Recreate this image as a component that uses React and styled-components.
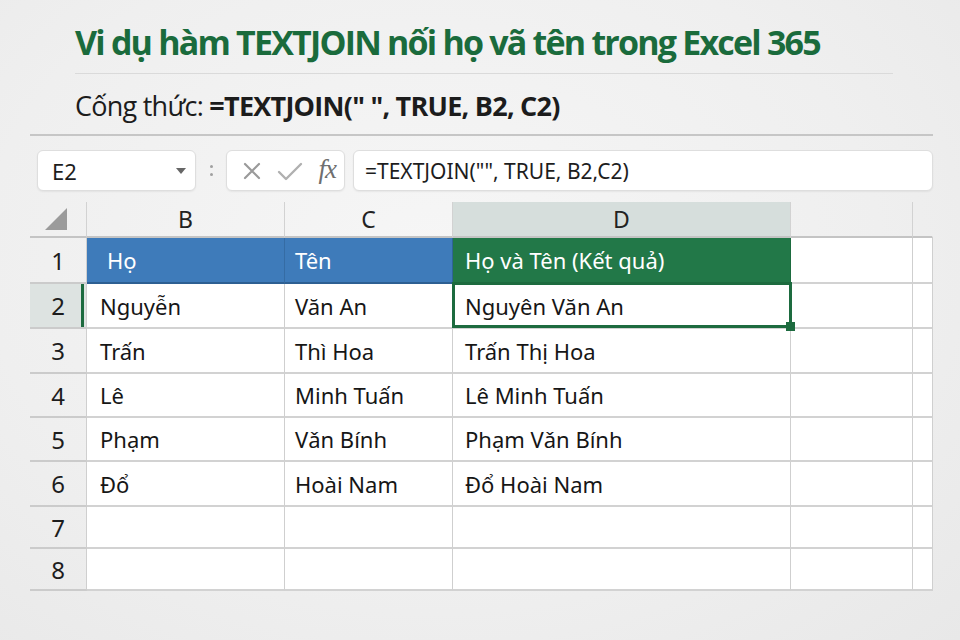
import styled, { createGlobalStyle, css } from "styled-components";

const GlobalStyle = createGlobalStyle`
  html, body {
    margin: 0;
    padding: 0;
  }
  body {
    background: radial-gradient(ellipse at 45% 40%, #f6f6f6 0%, #efefef 60%, #e8e8e8 100%);
    min-height: 640px;
    font-family: "Noto Sans", "Open Sans", sans-serif;
    color: #1d1d1d;
  }
`;

const Page = styled.div`
  width: 960px;
  height: 640px;
  box-sizing: border-box;
  padding: 20px 27px 0 30px;
  overflow: hidden;
`;

const Title = styled.h1`
  margin: 0 0 0 45px;
  height: 44px;
  line-height: 44px;
  font-family: "Open Sans", "Noto Sans", sans-serif;
  font-size: 34px;
  font-weight: 700;
  font-stretch: 88%;
  letter-spacing: -1.8px;
  color: #1a6b3c;
  white-space: nowrap;
`;

const Rule = styled.div`
  height: ${(p) => (p.$thick ? 2 : 1)}px;
  background: ${(p) => (p.$thick ? "#c6c6c6" : "#dadada")};
  margin: ${(p) => p.$margin};
`;

const Subtitle = styled.div`
  margin: 14px 0 0 45px;
  height: 36px;
  line-height: 36px;
  font-family: "Open Sans", "Noto Sans", sans-serif;
  font-size: 27px;
  font-stretch: 93%;
  letter-spacing: -0.75px;
  color: #1c1c1c;
  white-space: nowrap;

  b {
    font-weight: 700;
  }
`;

const FormulaBar = styled.div`
  display: flex;
  align-items: center;
  height: 41px;
  margin-top: 14px;
`;

const Box = styled.div`
  box-sizing: border-box;
  height: 41px;
  background: #fff;
  border: 1px solid #dedede;
  border-radius: 6px;
  box-shadow: 0 1px 2px rgba(0, 0, 0, 0.06);
  display: flex;
  align-items: center;
`;

const NameBox = styled(Box)`
  width: 159px;
  margin-left: 7px;
  padding: 0 9px 0 14px;
  justify-content: space-between;
  font-size: 22px;
  color: #1d1d1d;
`;

const Caret = styled.span`
  width: 0;
  height: 0;
  border-left: 5px solid transparent;
  border-right: 5px solid transparent;
  border-top: 6px solid #666;
`;

const Colon = styled.div`
  width: 30px;
  display: flex;
  flex-direction: column;
  align-items: center;
  gap: 5px;

  span {
    width: 3px;
    height: 3px;
    border-radius: 50%;
    background: #a0a0a0;
  }
`;

const FuncBox = styled(Box)`
  width: 119px;
  padding: 0 8px 0 16px;
  justify-content: space-between;
`;

const Fx = styled.span`
  font-family: "Liberation Serif", "DejaVu Serif", serif;
  font-style: italic;
  font-size: 27px;
  color: #6f6f6f;
  letter-spacing: -1px;
  margin-top: -3px;
`;

const FormulaInput = styled(Box)`
  flex: 1;
  margin-left: 8px;
  padding-left: 11px;
  font-size: 21px;
  color: #1d1d1d;
`;

const Grid = styled.div`
  display: grid;
  grid-template-columns: 57px 198px 168px 338px 122px 20px;
  grid-template-rows: 36px 46px 45px 45px 44px 44px 45px 42px 42px;
  margin-top: 11px;
  width: 903px;
`;

const HeadCell = styled.div`
  box-sizing: border-box;
  display: flex;
  align-items: center;
  justify-content: center;
  font-size: 23px;
  color: #222;
  border-bottom: 2px solid #c4c4c4;
  border-right: 1px solid ${(p) => (p.$last ? "transparent" : "#d2d2d2")};
  background: ${(p) => (p.$active ? "#d6dedc" : "transparent")};
  position: relative;
`;

const RowNum = styled.div`
  box-sizing: border-box;
  display: flex;
  align-items: center;
  justify-content: center;
  font-size: 24px;
  color: #1d1d1d;
  border-bottom: 2px solid #cbcbcb;
  border-right: 1px solid #cfcfcf;
  background: ${(p) => (p.$active ? "#dde3e1" : "transparent")};
  position: relative;

  ${(p) =>
    p.$active &&
    css`
      &::after {
        content: "";
        position: absolute;
        right: 2px;
        top: 0;
        bottom: 0;
        width: 3px;
        background: #1d6b3f;
      }
    `}
`;

const Cell = styled.div`
  box-sizing: border-box;
  display: flex;
  align-items: center;
  padding-left: ${(p) => p.$pad || 12}px;
  font-size: 22px;
  color: #161616;
  background: ${(p) => p.$bg || "#fff"};
  border-bottom: 2px solid #d2d2d2;
  border-right: 1px solid ${(p) => p.$line || "#cfcfcf"};
  white-space: nowrap;
  position: relative;
`;

const HeaderCell = styled(Cell)`
  color: #fff;
  border-bottom: 2px solid ${(p) => p.$edge};
`;

const Selected = styled.div`
  position: absolute;
  z-index: 5;
  left: -1px;
  top: -2px;
  right: -2px;
  bottom: -1px;
  border: 3px solid #1d6b3f;
  pointer-events: none;

  &::after {
    content: "";
    position: absolute;
    right: -6px;
    bottom: -6px;
    width: 9px;
    height: 9px;
    background: #1d6b3f;
  }
`;

const rows = [
  ["Nguyễn", "Văn An", "Nguyên Văn An"],
  ["Trấn", "Thì Hoa", "Trấn Thị Hoa"],
  ["Lê", "Minh Tuấn", "Lê Minh Tuấn"],
  ["Phạm", "Vǎn Bính", "Phạm Vǎn Bính"],
  ["Đổ", "Hoài Nam", "Đổ Hoài Nam"],
  ["", "", ""],
  ["", "", ""],
];

export default function App() {
  return (
    <>
      <GlobalStyle />
      <Page>
        <Title>Vi dụ hàm TEXTJOIN nối họ vã tên trong Excel 365</Title>
        <Rule $margin="9px 40px 0 45px" />
        <Subtitle>
          Cống thức: <b>=TEXTJOIN(" ", TRUE, B2, C2)</b>
        </Subtitle>
        <Rule $thick $margin="10px 0 0 0" />

        <FormulaBar>
          <NameBox>
            E2
            <Caret />
          </NameBox>
          <Colon>
            <span />
            <span />
          </Colon>
          <FuncBox>
            <svg width="18" height="18" viewBox="0 0 18 18">
              <path d="M2 2 L16 16 M16 2 L2 16" stroke="#9a9a9a" strokeWidth="2.2" strokeLinecap="round" />
            </svg>
            <svg width="26" height="20" viewBox="0 0 26 20">
              <path d="M2 11 L9 18 L24 3" fill="none" stroke="#b0b0b0" strokeWidth="2.4" strokeLinecap="round" strokeLinejoin="round" />
            </svg>
            <Fx>fx</Fx>
          </FuncBox>
          <FormulaInput>=TEXTJOIN("", TRUE, B2,C2)</FormulaInput>
        </FormulaBar>

        <Grid>
          <HeadCell>
            <svg width="24" height="24" viewBox="0 0 24 24" style={{ marginLeft: -4 }}>
              <polygon points="23,1 23,23 1,23" fill="#9b9b9b" />
            </svg>
          </HeadCell>
          <HeadCell>B</HeadCell>
          <HeadCell>C</HeadCell>
          <HeadCell $active>D</HeadCell>
          <HeadCell />
          <HeadCell $last />

          <RowNum>1</RowNum>
          <HeaderCell $bg="#3e7bba" $edge="#2d5f92" $line="#356ca4" $pad={20}>Họ</HeaderCell>
          <HeaderCell $bg="#3e7bba" $edge="#2d5f92" $line="#2f6498" $pad={10}>Tên</HeaderCell>
          <HeaderCell $bg="#227848" $edge="#1d6b3f" $line="#1d6b3f">Họ và Tên (Kết quả)</HeaderCell>
          <Cell />
          <Cell />

          {rows.map((r, i) => (
            <Row key={i} n={i + 2} data={r} />
          ))}
        </Grid>
      </Page>
    </>
  );
}

function Row({ n, data }) {
  return (
    <>
      <RowNum $active={n === 2}>{n}</RowNum>
      <Cell $pad={13}>{data[0]}</Cell>
      <Cell $pad={10}>{data[1]}</Cell>
      <Cell>
        {data[2]}
        {n === 2 && <Selected />}
      </Cell>
      <Cell />
      <Cell />
    </>
  );
}
